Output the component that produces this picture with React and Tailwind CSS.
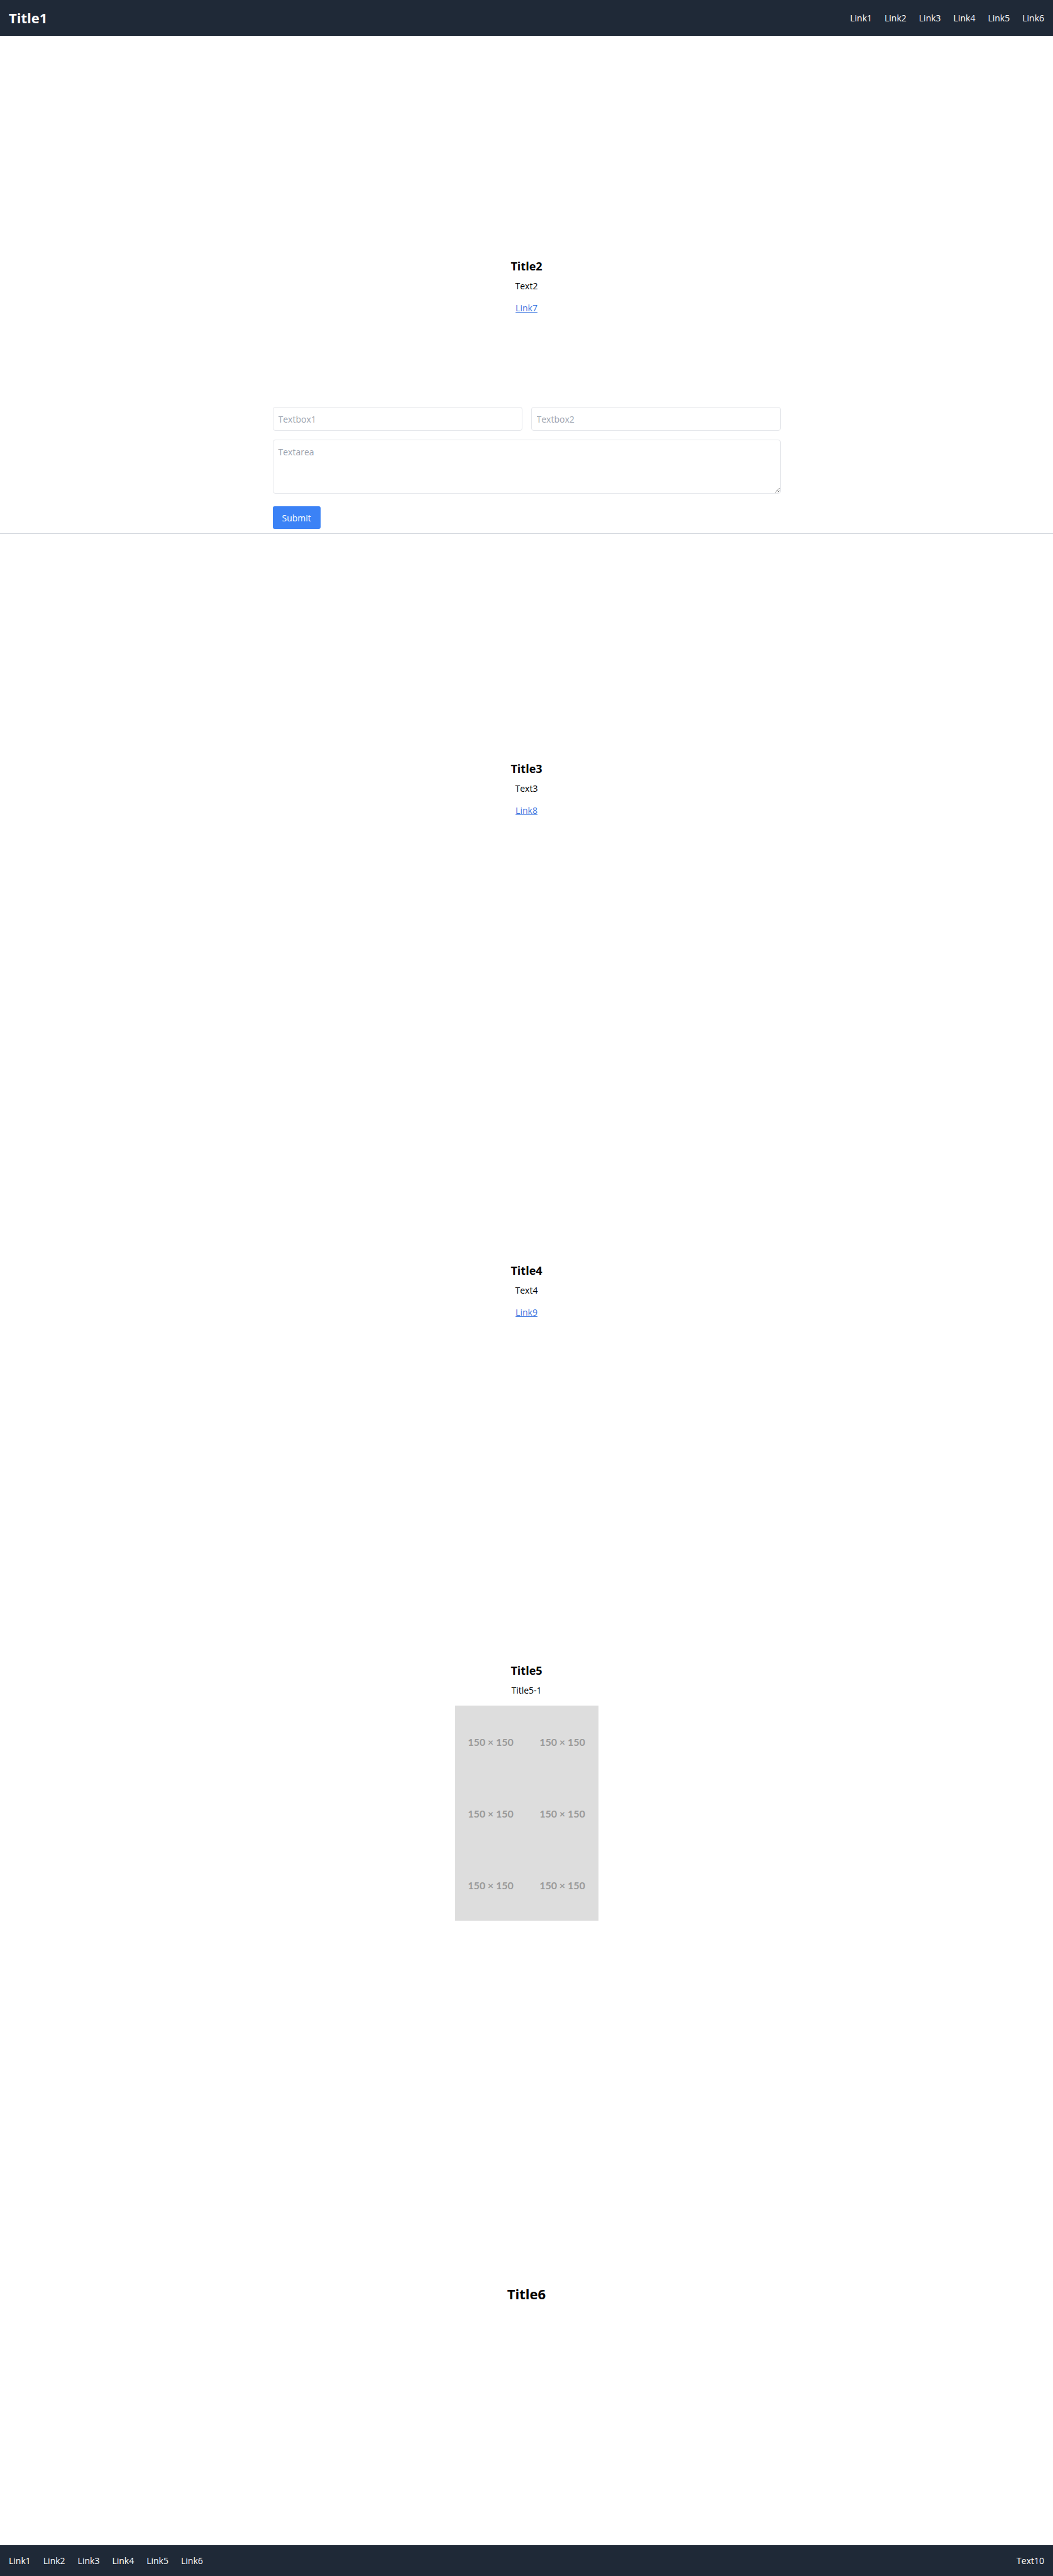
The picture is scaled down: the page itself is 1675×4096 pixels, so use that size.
const navLinks = ["Link1", "Link2", "Link3", "Link4", "Link5", "Link6"];

function LinkList({ label }) {
  return (
    <nav aria-label={label} className="flex gap-5">
      {navLinks.map((name) => (
        <a key={name} href="#" className="hover:underline">
          {name}
        </a>
      ))}
    </nav>
  );
}

function Intro({ title, text, link }) {
  return (
    <div className="flex flex-col items-center">
      <h2 className="mb-1.5 text-[18px] leading-[27px] font-bold">{title}</h2>
      <p className="mb-3 leading-[23px]">{text}</p>
      <a href="#" className="leading-[23px] text-[#3b76e0] underline">
        {link}
      </a>
    </div>
  );
}

const fieldClass =
  "block w-full rounded border border-[#e5e7eb] px-2 text-[14px] leading-[23px] placeholder:text-[#9ca3af]";

function ContactForm() {
  return (
    <form
      className="mx-auto grid w-full max-w-[808px] grid-cols-2 gap-[14px]"
      onSubmit={(e) => e.preventDefault()}
    >
      <input aria-label="Textbox1" placeholder="Textbox1" className={fieldClass + " h-[38px]"} />
      <input aria-label="Textbox2" placeholder="Textbox2" className={fieldClass + " h-[38px]"} />
      <textarea
        aria-label="Textarea"
        placeholder="Textarea"
        className={fieldClass + " col-span-2 h-[86px] resize py-[7px]"}
      />
      <div className="col-span-2 pt-1.5">
        <button
          type="submit"
          className="block h-9 rounded-[3px] bg-[#3b82f6] px-[15px] leading-[23px] text-white"
        >
          Submit
        </button>
      </div>
    </form>
  );
}

export default function App() {
  return (
    <div className="bg-white font-['Open_Sans',sans-serif] text-[14px] leading-[23px] text-black">
      <header className="flex h-[57px] items-center justify-between bg-[#1f2937] px-[14px] text-white">
        <h1 className="text-[22px] leading-[31px] font-bold">Title1</h1>
        <LinkList label="Main" />
      </header>
      <main>
        <section className="border-b border-gray-300 pt-[353px] pb-[7px]">
          <Intro title="Title2" text="Text2" link="Link7" />
          <div className="pt-[146px]">
            <ContactForm />
          </div>
        </section>
        <section className="py-[360px]">
          <Intro title="Title3" text="Text3" link="Link8" />
        </section>
        <section className="pt-[347px] pb-[270px]">
          <Intro title="Title4" text="Text4" link="Link9" />
        </section>
        <section className="flex flex-col items-center pt-[275px] pb-[288px]">
          <h2 className="mb-1.5 text-[18px] leading-[27px] font-bold">Title5</h2>
          <h3 className="mb-[13px] leading-[23px]">Title5-1</h3>
          <div className="grid grid-cols-2">
            {[1, 2, 3, 4, 5, 6].map((n) => (
              <div
                key={n}
                className="flex size-[114px] items-center justify-center bg-[#ddd] font-['Lato',sans-serif] text-[16px] font-bold text-[#999]"
              >
                150 × 150
              </div>
            ))}
          </div>
        </section>
        <section className="flex justify-center pt-[290px] pb-[384px]">
          <h2 className="text-[22px] leading-[31px] font-bold">Title6</h2>
        </section>
      </main>
      <footer className="flex h-[49px] items-center justify-between bg-[#1f2937] px-[14px] text-white">
        <LinkList label="Footer" />
        <p>Text10</p>
      </footer>
    </div>
  );
}
